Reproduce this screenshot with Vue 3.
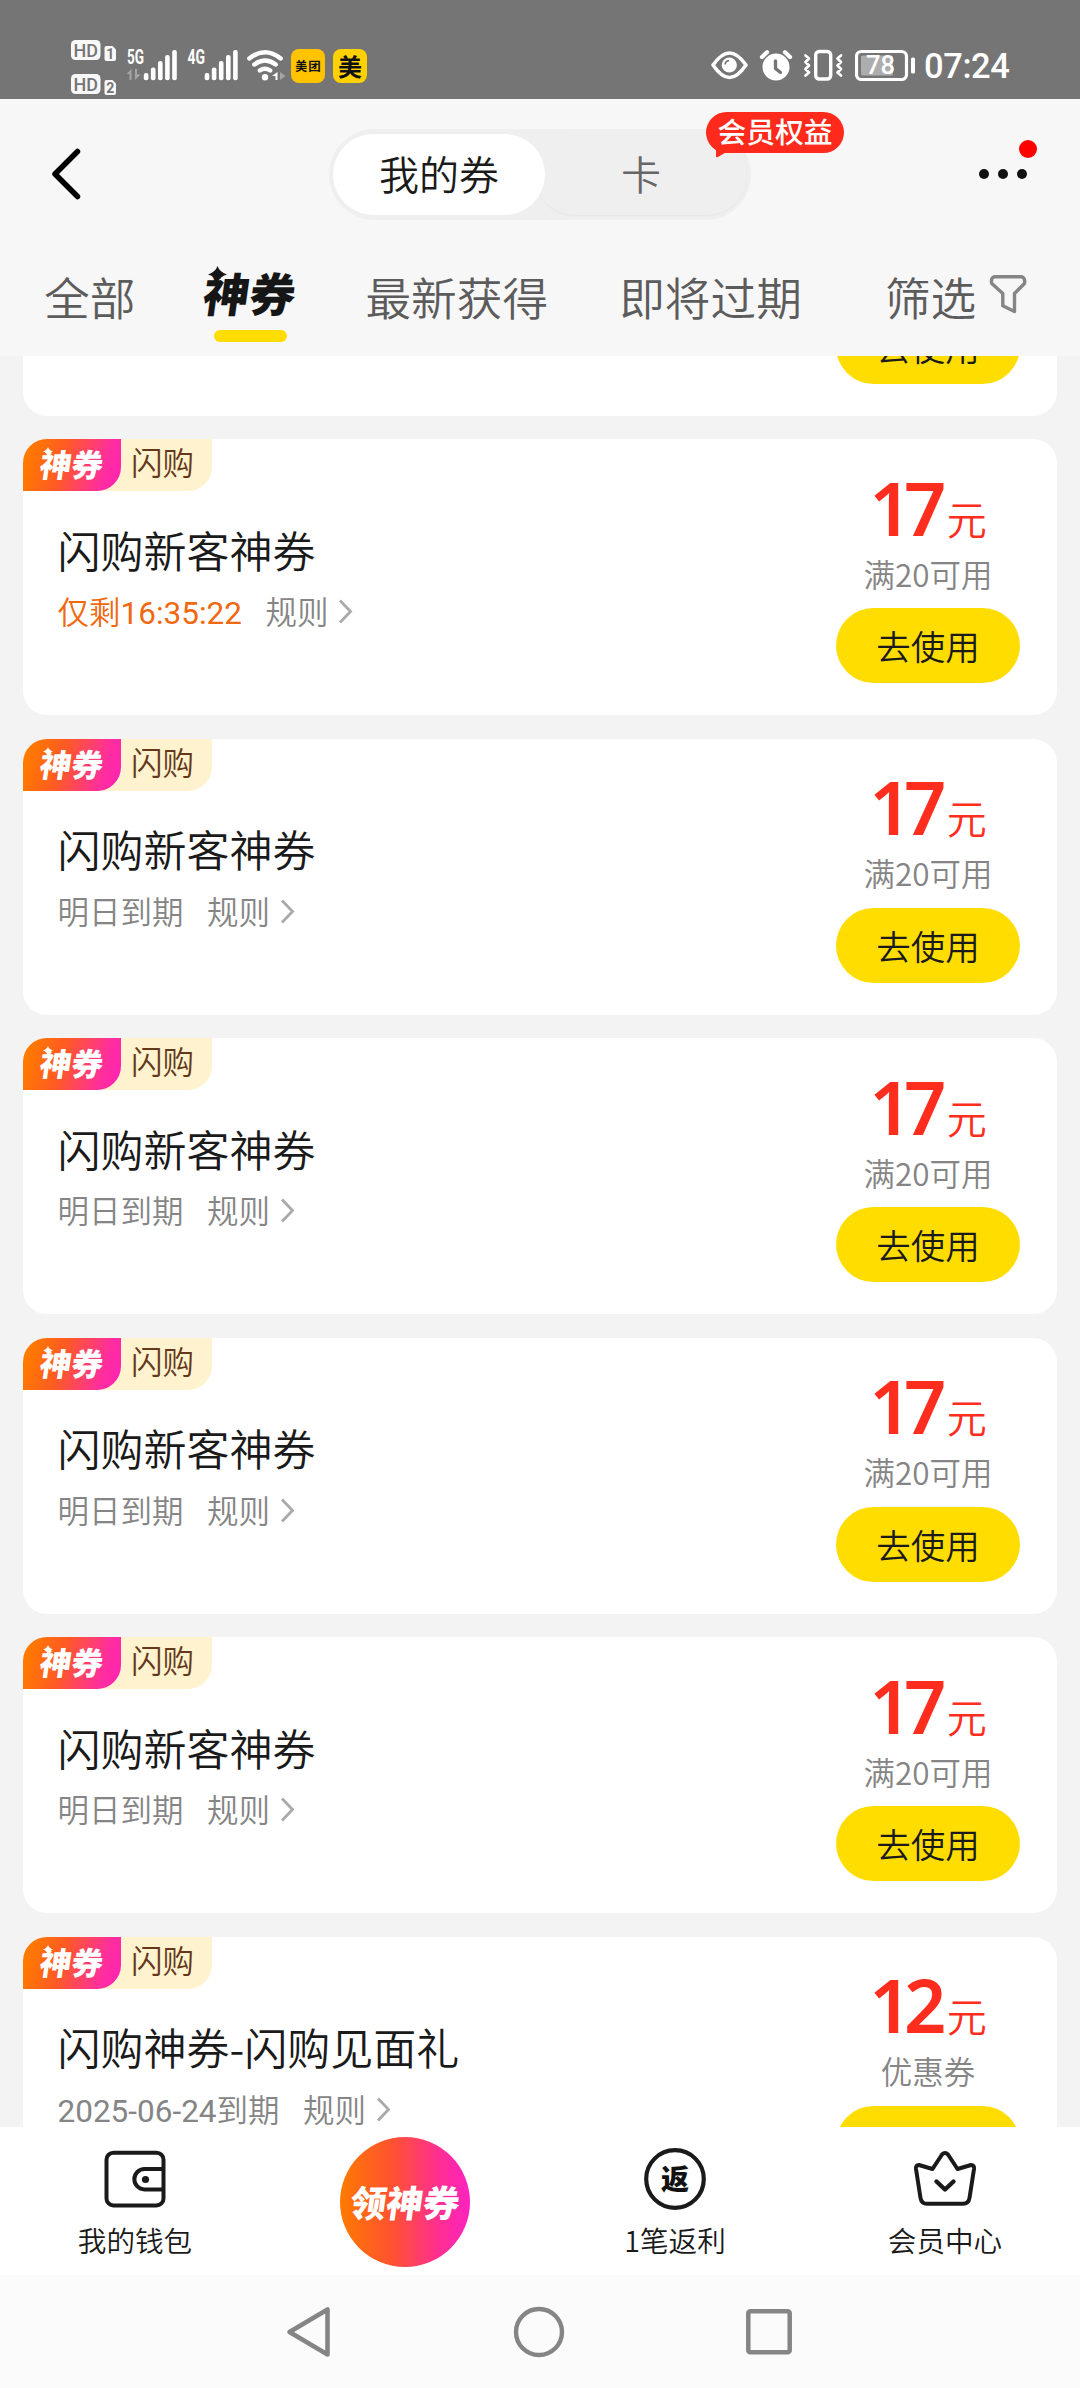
<script setup>
const coupons = [
  { id: 0 },
  { id: 1, title: '闪购新客神券', before: '仅剩', num: '16:35:22', after: '', urgent: true, amount: '17', limit: '满20可用' },
  { id: 2, title: '闪购新客神券', before: '明日到期', num: '', after: '', amount: '17', limit: '满20可用' },
  { id: 3, title: '闪购新客神券', before: '明日到期', num: '', after: '', amount: '17', limit: '满20可用' },
  { id: 4, title: '闪购新客神券', before: '明日到期', num: '', after: '', amount: '17', limit: '满20可用' },
  { id: 5, title: '闪购新客神券', before: '明日到期', num: '', after: '', amount: '17', limit: '满20可用' },
  { id: 6, title: '闪购神券-闪购见面礼', before: '', num: '2025-06-24', after: '到期', amount: '12', limit: '优惠券' },
]
const bars = [
  { x: 0, y: 73 },
  { x: 7.1, y: 67.5 },
  { x: 14.2, y: 61 },
  { x: 21.3, y: 55 },
  { x: 28.4, y: 50 },
]
</script>

<template>
  <div class="screen">
    <div class="status">
      <svg class="hd" width="46" height="99" viewBox="71 0 46 99">
        <g v-for="(dy, i) in [0, 34]" :key="i" :transform="`translate(0 ${dy})`">
          <rect x="71" y="40" width="29.5" height="20" rx="4.5" fill="#f8f8f8" />
          <text x="85.7" y="56.6" font-size="19" font-weight="500" textLength="24.5" lengthAdjust="spacingAndGlyphs" fill="#757575" text-anchor="middle">HD</text>
          <path d="M106.500 46h6l3.500 3.500v9.500a2 2 0 0 1-2 2h-7.500a2 2 0 0 1-2-2v-11a2 2 0 0 1 2-2z" fill="#f8f8f8" />
          <text x="110.300" y="58.500" font-size="14" font-weight="700" fill="#757575" text-anchor="middle">{{ i + 1 }}</text>
        </g>
      </svg>
      <svg class="signal" width="52" height="99" viewBox="126 0 52 99">
        <text x="127" y="63.800" font-size="20.500" font-weight="700" textLength="17" lengthAdjust="spacingAndGlyphs" fill="#fff">5G</text>
        <rect v-for="b in bars" :key="b.x" :x="143.800 + b.x" :y="b.y" width="4.600" :height="80.300 - b.y" rx="2" fill="#fff" />
        <path d="M131.500 69v11h-2v-6h-3zM135 69v11l5.500-5.500h-3.500v-5.500z" fill="#a5a5a5" />
      </svg>
      <svg class="signal2" width="52" height="99" viewBox="187 0 52 99">
        <text x="187.500" y="63.800" font-size="20.500" font-weight="700" textLength="17.500" lengthAdjust="spacingAndGlyphs" fill="#fff">4G</text>
        <rect v-for="b in bars" :key="b.x" :x="204.700 + b.x" :y="b.y" width="4.600" :height="80.300 - b.y" rx="2" fill="#fff" />
      </svg>
      <svg class="wifi" width="40" height="99" viewBox="246 0 40 99" fill="none" stroke="#fff" stroke-width="4.400" stroke-linecap="round">
        <path d="M249.300 58.500Q265 46 280.700 58.500M254.300 64.500Q265 56.500 275.700 64.500M259.800 70.500Q265 67 270.200 70.500" />
        <circle cx="265" cy="77.300" r="3.200" fill="#fff" stroke="none" />
        <path d="M277.500 72v8h-2v-4h-3.500z" fill="#fff" stroke="none" />
        <path d="M280 72l5.500 4-5.500 4z" fill="#a5a5a5" stroke="none" />
      </svg>
      <div class="app-icon small">美<i>团</i></div>
      <div class="app-icon big">美</div>
      <div class="spacer"></div>
      <svg width="38" height="99" viewBox="711 0 38 99" fill="none" stroke="#fff" stroke-width="3.600">
        <path d="M713 65Q721.500 53 729.500 53T746 65Q737.500 77.500 729.500 77.500T713 65z" stroke-linejoin="round" />
        <circle cx="729.300" cy="65" r="7.600" fill="#fff" stroke="none" />
        <path d="M725 64.500q.500-3.500 4-4" stroke="#757575" stroke-width="1.600" />
      </svg>
      <svg class="alarm" width="34" height="99" viewBox="759 0 34 99" fill="none" stroke="#fff" stroke-linecap="round">
        <circle cx="776" cy="67" r="13.500" fill="#fff" stroke="none" />
        <path d="M762 57l5-4.700M790 57l-5-4.700" stroke-width="4.200" />
        <path d="M775.500 61v7.500l5 4" stroke="#757575" stroke-width="3.400" />
      </svg>
      <svg class="vibrate" width="40" height="99" viewBox="803 0 40 99" fill="none" stroke="#fff" stroke-width="3.400" stroke-linecap="round" stroke-linejoin="round">
        <rect x="815.700" y="51.500" width="15" height="27.500" rx="3.500" />
        <path d="M805.500 55.500l3.500 3-3.500 3.500 3.500 3.500-3.500 3.500 3.500 3.500-3.500 3M841 55.500l-3.500 3 3.500 3.500-3.500 3.500 3.500 3.500-3.500 3.500 3.500 3" stroke-width="2.700" />
      </svg>
      <svg class="battery" width="61" height="99" viewBox="855 0 61 99">
        <rect x="856.500" y="51.500" width="50" height="28" rx="5" fill="none" stroke="#fff" stroke-width="3.200" />
        <rect x="861" y="55.500" width="32" height="20" rx="1.500" fill="#adadad" />
        <rect x="911" y="57.500" width="4" height="16" rx="1.500" fill="#fff" />
        <text x="880.500" y="73.900" font-size="25.500" font-weight="500" fill="#fff" text-anchor="middle">78</text>
      </svg>
      <span class="time">07:24</span>
    </div>

    <header class="header">
      <svg class="back" width="32" height="54" viewBox="50 147 32 54"><path d="M77.500 151.500L55 174l22.500 22.500" fill="none" stroke="#000" stroke-width="5.500" stroke-linecap="round" stroke-linejoin="round" /></svg>
      <div class="switch">
        <div class="seg on">我的券</div>
        <div class="seg off">卡</div>
        <div class="bubble">会员权益
          <svg width="14" height="9" viewBox="0 0 14 9"><path d="M1 0v7q0 1.800 2 1L13 2V0z" fill="#ff2a1c" /></svg>
        </div>
      </div>
      <div class="more">
        <b></b><b></b><b></b>
        <em></em>
      </div>
    </header>

    <nav class="tabs">
      <span class="t1">全部</span>
      <div class="t2">
        <span class="brand">神券</span>
        <svg class="star" width="19" height="17" viewBox="0 0 19 17"><path d="M9.500 0Q11.500 6 19 8.500Q11.500 10.500 9.500 17Q7.500 10.500 0 8.500Q7.500 6 9.500 0z" fill="#161616" /></svg>
        <div class="underline"></div>
      </div>
      <span class="t3">最新获得</span>
      <span class="t4">即将过期</span>
      <span class="t5">筛选</span>
      <svg class="filter" width="38" height="42" viewBox="991 273 38 42"><path d="M996 276.800H1024Q1027.500 278.500 1026.500 283.500L1016.500 293.500V311.500L1004.800 305.800V293.500L993.800 283.500Q992.500 278.500 996 276.800z" fill="none" stroke="#858585" stroke-width="3.400" stroke-linejoin="round" /></svg>
    </nav>

    <main class="list">
      <div class="track">
        <article v-for="c in coupons" :key="c.id" class="card">
          <div class="info">
            <template v-if="c.title">
              <div class="tag">
                <div class="tag-brand"><span>神券</span>
                  <svg width="10" height="9" viewBox="0 0 19 17"><path d="M9.500 0Q11.500 6 19 8.500Q11.500 10.500 9.500 17Q7.500 10.500 0 8.500Q7.500 6 9.500 0z" fill="#fff" /></svg>
                </div>
                <div class="tag-kind">闪购</div>
              </div>
              <h3>{{ c.title }}</h3>
              <div class="meta">
                <span :class="{ urgent: c.urgent }">{{ c.before }}<span v-if="c.num" class="num">{{ c.num }}</span>{{ c.after }}</span>
                <span class="rule">规则</span>
                <svg width="15" height="27" viewBox="0 0 15 27"><path d="M2 2.500L12.500 13.500L2 24.500" fill="none" stroke="#aaa" stroke-width="2.800" /></svg>
              </div>
            </template>
          </div>
          <div class="side">
            <template v-if="c.amount">
              <div class="price"><span class="amount">{{ c.amount }}</span><span class="unit">元</span></div>
              <div class="limit">{{ c.limit }}</div>
            </template>
            <div class="btn">去使用</div>
          </div>
        </article>
      </div>
    </main>

    <footer class="bottom">
      <div class="item">
        <svg width="66" height="66" viewBox="102 2146 66 66" fill="none" stroke="#1a1a1a" stroke-width="4">
          <rect x="106.500" y="2152.700" width="57" height="52.800" rx="7" />
          <path d="M163 2169H144.500a10.200 10.200 0 0 0 0 20.400H163" />
          <circle cx="145.500" cy="2179.500" r="3.600" fill="#1a1a1a" stroke="none" />
        </svg>
        <span>我的钱包</span>
      </div>
      <div class="item"><div class="orb"><span>领神券</span></div></div>
      <div class="item">
        <svg width="66" height="66" viewBox="642 2146 66 66">
          <circle cx="675" cy="2179" r="28.800" fill="none" stroke="#1a1a1a" stroke-width="4.200" />
          <text class="fan" x="675" y="2189.500" text-anchor="middle" fill="#111">返</text>
        </svg>
        <span>1笔返利</span>
      </div>
      <div class="item">
        <svg width="66" height="66" viewBox="912 2146 66 66" fill="none" stroke="#1a1a1a" stroke-width="4" stroke-linejoin="round" stroke-linecap="round">
          <path d="M942 2154.500Q945 2151.500 948 2154.500L957.500 2169L971 2165Q974.500 2165 974 2169L969.500 2198Q968.500 2203.800 963 2203.800H927Q921.500 2203.800 920.500 2198L916 2169Q915.500 2165 919 2165L932.500 2169z" />
          <path d="M936.500 2181.500L945 2189.500L953.500 2181.500" stroke-width="4.400" />
        </svg>
        <span>会员中心</span>
      </div>
    </footer>

    <div class="sysnav">
      <svg width="46" height="54" viewBox="286 2305 46 54"><path d="M327.500 2309.500V2354.500L289.500 2332z" fill="none" stroke="#858585" stroke-width="4.600" stroke-linejoin="round" /></svg>
      <svg width="54" height="54" viewBox="0 0 54 54"><circle cx="27" cy="27" r="23" fill="none" stroke="#858585" stroke-width="4.400" /></svg>
      <svg width="46" height="54" viewBox="0 0 46 54"><rect x="2.300" y="6.300" width="41.400" height="41" rx="2" fill="none" stroke="#858585" stroke-width="4.500" /></svg>
    </div>
  </div>
</template>

<style>
body {
  margin: 0;
  background: #f3f3f3;
}
</style>

<style scoped>
.screen {
  width: 1080px;
  height: 2388px;
  display: flex;
  flex-direction: column;
  overflow: hidden;
  background: #f3f3f3;
  font-family: "Noto Sans CJK SC", sans-serif;
  font-weight: 350;
  color: #1a1a1a;
}
svg {
  display: block;
  flex: none;
}
.status {
  height: 99px;
  flex: none;
  display: flex;
  align-items: flex-start;
  padding: 0 71px;
  background: #757575;
  font-family: Roboto, sans-serif;
}
.signal { margin-left: 9px; }
.signal2 { margin-left: 9px; }
.wifi { margin-left: 7px; }
.app-icon {
  width: 34px;
  height: 34px;
  margin: 49px 0 0 5px;
  border-radius: 8px;
  display: flex;
  align-items: center;
  justify-content: center;
  background: #ffc300;
  color: #111;
  font: 700 12px/34px "Noto Sans CJK SC", sans-serif;
}
.app-icon.big {
  margin-left: 8px;
  background: #ffd100;
  font-size: 24px;
  line-height: 32px;
}
.app-icon i {
  margin-left: 1px;
  font-style: normal;
  font-size: 12.5px;
}
.spacer { flex: 1; }
.alarm { margin-left: 10px; }
.vibrate { margin-left: 10px; }
.battery { margin-left: 12px; }
.time {
  width: 85px;
  margin: 46px 0 0 8px;
  font-size: 34.500px;
  font-weight: 500;
  line-height: 41px;
  letter-spacing: -0.4px;
  color: #fff;
  white-space: nowrap;
}
.header {
  height: 150px;
  flex: none;
  display: flex;
  align-items: center;
  padding: 0 49px 0 50px;
  background: #f7f7f7;
}
.switch {
  position: relative;
  width: 414px;
  height: 81px;
  margin-left: 247px;
  padding: 5px 4px;
  display: flex;
  border-radius: 46px;
  background: #efefef;
}
.seg {
  border-radius: 41px;
  text-align: center;
  font-size: 40px;
  line-height: 79px;
}
.seg.on {
  position: relative;
  z-index: 1;
  width: 212px;
  background: #fff;
  color: #1a1a1a;
}
.seg.off {
  width: 212px;
  margin-left: -10px;
  color: #666;
  box-shadow: 0 1px 2px #e6e6e6;
}
.bubble {
  position: absolute;
  left: 377px;
  top: -17px;
  width: 138px;
  height: 41px;
  border-radius: 21px;
  background: #ff2a1c;
  color: #fff;
  font-size: 28.800px;
  font-weight: 500;
  line-height: 38px;
  text-align: center;
  white-space: nowrap;
}
.bubble svg {
  position: absolute;
  left: 9px;
  top: 37px;
}
.more {
  position: relative;
  margin-left: auto;
  padding-right: 4px;
  display: flex;
  gap: 8.600px;
}
.more b {
  width: 10.400px;
  height: 10.400px;
  border-radius: 50%;
  background: #111;
}
.more em {
  position: absolute;
  right: -6px;
  top: -29px;
  width: 18px;
  height: 18px;
  border-radius: 50%;
  background: #f00;
}
.tabs {
  height: 107px;
  flex: none;
  display: flex;
  align-items: flex-start;
  padding-left: 44px;
  background: #f7f7f7;
  font-size: 45.700px;
  line-height: 94px;
  color: #5c5c5c;
  white-space: nowrap;
}
.t2 {
  position: relative;
  width: 92px;
  height: 94px;
  margin-left: 69px;
}
.brand {
  display: block;
  height: 88px;
  font-size: 46px;
  line-height: 86px;
  font-weight: 900;
  color: #161616;
  transform: skewX(-8deg);
}
.star {
  position: absolute;
  left: 4px;
  top: 17px;
}
.underline {
  width: 73px;
  height: 12px;
  margin: -7px auto 0;
  border-radius: 6px;
  background: #fd0;
}
.t3 { margin-left: 69px; }
.t4 { margin-left: 71px; }
.t5 { margin-left: 83px; }
.filter { margin: 24px 0 0 13px; }
.list {
  height: 1771px;
  flex: none;
  overflow: hidden;
}
.track {
  display: flex;
  flex-direction: column;
  gap: 23.500px;
  margin: -216.500px 23px 0;
}
.card {
  height: 276px;
  flex: none;
  display: flex;
  justify-content: space-between;
  border-radius: 24px;
  background: #fff;
}
.tag {
  width: 189px;
  height: 52px;
  display: flex;
  border-radius: 24px 0 24px 0;
  background: #fff3cf;
}
.tag-brand {
  position: relative;
  width: 98px;
  border-radius: 24px 0 24px 0;
  background: linear-gradient(105deg, #ff7a00 8%, #ff5a24 40%, #ff2e9e 80%, #ff22b8);
  color: #fff;
  font-size: 31.500px;
  font-weight: 900;
  line-height: 48px;
  text-align: center;
}
.tag-brand span {
  display: block;
  transform: skewX(-8deg);
}
.tag-brand svg {
  position: absolute;
  left: 20px;
  top: 8px;
}
.tag-kind {
  margin-left: 10px;
  font-size: 31.500px;
  line-height: 45px;
  color: #65381a;
}
h3 {
  margin: 27.500px 0 0 34.500px;
  font-size: 43px;
  line-height: 60px;
  font-weight: inherit;
  color: #1a1a1a;
}
.meta {
  display: flex;
  align-items: center;
  height: 40px;
  margin: 11.500px 0 0 34.500px;
  font-size: 31.500px;
  line-height: 40px;
  color: #858585;
}
.urgent { color: #f0680f; }
.num {
  font-family: Roboto, sans-serif;
  font-weight: 400;
  line-height: 1;
}
.rule { margin-left: 23.500px; }
.meta svg { margin: 3px 0 0 9.500px; }
.side {
  width: 184px;
  margin-right: 37px;
  display: flex;
  flex-direction: column;
  text-align: center;
}
.price {
  height: 60px;
  margin-top: 38.500px;
  display: flex;
  justify-content: center;
  align-items: baseline;
  color: #ff2d1e;
  line-height: 60px;
}
.amount {
  font-family: "Noto Sans", sans-serif;
  font-size: 74px;
  font-weight: 600;
  letter-spacing: -7.500px;
}
.unit {
  margin-left: 8px;
  font-size: 40px;
  transform: translateY(-1px);
}
.limit {
  margin-top: 15px;
  font-size: 31.500px;
  line-height: 40px;
  color: #858585;
}
.btn {
  height: 75px;
  margin-top: auto;
  margin-bottom: 32px;
  border-radius: 38px;
  background: #fd0;
  font-size: 34.500px;
  line-height: 75px;
}
.bottom {
  height: 148px;
  flex: none;
  display: flex;
  background: #fff;
}
.item {
  width: 270px;
  display: flex;
  flex-direction: column;
  align-items: center;
  padding-top: 19px;
  box-sizing: border-box;
  font-size: 28.600px;
  line-height: 40px;
}
.item > span { margin-top: 8px; }
.orb {
  width: 130px;
  height: 130px;
  margin-top: -9px;
  border-radius: 50%;
  background: linear-gradient(90deg, #ff7a00, #ff5230 40%, #ff2f90 75%, #ff22c0);
  color: #fff;
  font-size: 36.500px;
  font-weight: 900;
  line-height: 130px;
  text-align: center;
}
.orb span {
  display: block;
  transform: skewX(-8deg);
}
.fan {
  font-size: 28px;
  font-weight: 900;
}
.sysnav {
  height: 113px;
  flex: none;
  display: flex;
  justify-content: space-between;
  align-items: center;
  box-sizing: border-box;
  padding: 0 288px 0 286px;
  background: #fbfbfb;
}
</style>
